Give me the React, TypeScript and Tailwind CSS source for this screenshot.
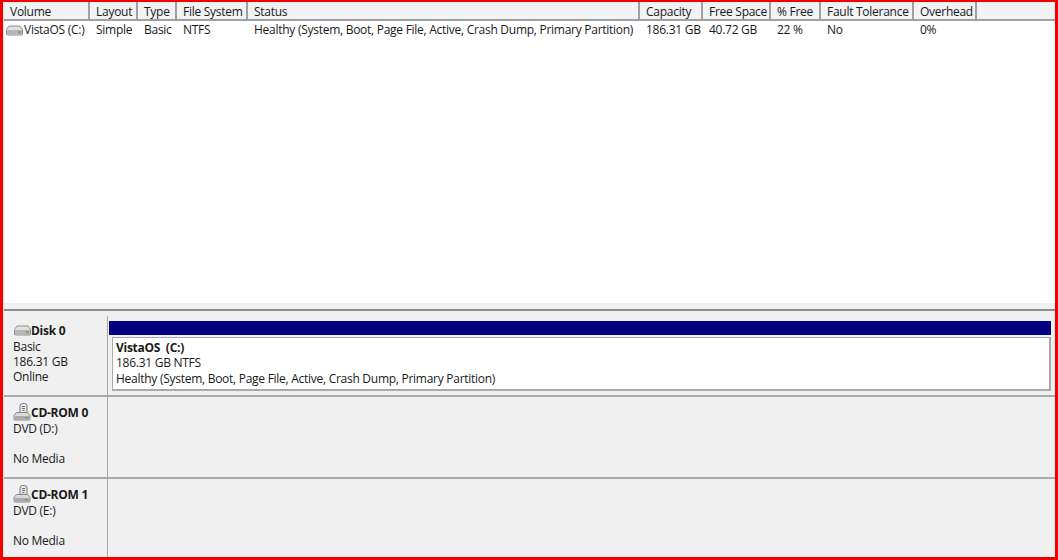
import React from 'react';

const columns = [
  { label: 'Volume', width: 'w-[86px]', value: 'VistaOS (C:)' },
  { label: 'Layout', width: 'w-[48px]', value: 'Simple' },
  { label: 'Type', width: 'w-[39px]', value: 'Basic' },
  { label: 'File System', width: 'w-[71px]', value: 'NTFS' },
  { label: 'Status', width: 'w-[392px]', value: 'Healthy (System, Boot, Page File, Active, Crash Dump, Primary Partition)' },
  { label: 'Capacity', width: 'w-[63px]', value: '186.31 GB' },
  { label: 'Free Space', width: 'w-[68px]', value: '40.72 GB' },
  { label: '% Free', width: 'w-[50px]', value: '22 %' },
  { label: 'Fault Tolerance', width: 'w-[93px]', value: 'No' },
  { label: 'Overhead', width: 'w-[63px]', value: '0%' },
];

function DiskIcon() {
  return (
    <svg width="17" height="11" viewBox="0 0 17 11" className="shrink-0">
      <path d="M3 1h11l2.500 3.500V9a1 1 0 0 1-1 1h-14a1 1 0 0 1-1-1V4.500z" fill="#dfe1df" stroke="#8e9192" />
      <rect x="1" y="5" width="15" height="4.500" fill="#b4b7b5" />
      <rect x="12" y="6" width="3" height="2.500" fill="#8aa184" />
    </svg>
  );
}

function CdIcon() {
  return (
    <svg width="18" height="18" viewBox="0 0 18 18" className="shrink-0">
      <path d="M7 9.500V3a2.500 2.500 0 0 1 2.500-2.500h2A2.500 2.500 0 0 1 14 3v6.500z" fill="#e9e9e9" stroke="#77797a" />
      <path d="M9 3.500h3M9 5.500h3M9.500 7.500h2" stroke="#6a6c6d" />
      <path d="M3.500 9.500h11l2.500 3v3.500a1 1 0 0 1-1 1H2a1 1 0 0 1-1-1v-3.500z" fill="#dadcda" stroke="#85888a" />
      <rect x="1.500" y="13" width="15" height="3.500" fill="#a8aba9" />
      <rect x="12" y="14" width="3" height="1.500" fill="#7f9a78" />
    </svg>
  );
}

function CdRow({ name, drive, rowClass }: { name: string; drive: string; rowClass: string }) {
  return (
    <div className={`flex ${rowClass} border-[#a9a9a9]`}>
      <div className="w-[104px] shrink-0 border-r border-[#a9a9a9] pl-[9px] pt-[5px] leading-[15px]">
        <div className="flex items-end h-[19px] font-bold">
          <CdIcon />
          <span className="mb-[1px]">{name}</span>
        </div>
        <div>{drive}</div>
        <div className="mt-[15px]">No Media</div>
      </div>
      <div className="flex-1" />
    </div>
  );
}

export default function App() {
  return (
    <div className="w-[1058px] h-[560px] overflow-hidden border-x-[3px] border-t-[2px] border-b-[3px] border-[#f10000] bg-[#f0f0f0] text-[12px] text-[#1a1a1a] font-['Open_Sans',sans-serif] tracking-[-0.27px]">
      <div className="h-full border-l border-[#e8e8e8]">
        <div className="h-[301px] bg-white">
          <div className="flex h-[19px] bg-[#f1f2f3] border-b-2 border-[#a0a0a0]">
            {columns.map((c) => (
              <div key={c.label} className={`${c.width} shrink-0 border-r-2 border-[#a0a0a0] pl-[6px] leading-[20px] whitespace-nowrap`}>
                {c.label}
              </div>
            ))}
          </div>
          <div className="flex h-[16px] mt-[1px] leading-[16px]">
            {columns.map((c, i) => (
              <div key={c.label} className={`${c.width} shrink-0 pl-[6px] whitespace-nowrap flex items-center`}>
                {i === 0 && <span className="-ml-[4px] mr-[1px]"><DiskIcon /></span>}
                {c.value}
              </div>
            ))}
          </div>
        </div>
        <div className="h-[8px] bg-[#f0f0f0] border-b-2 border-[#8c8c8c]" />
        <div className="h-[5px]" />
        <div className="flex h-[81px] border-b-2 border-[#a9a9a9]">
          <div className="w-[104px] shrink-0 border-r border-[#a9a9a9] pl-[9px] pt-[7px] leading-[15px]">
            <div className="flex items-center h-[15px] mb-[1px] font-bold ml-[1px]">
              <DiskIcon />
              <span>Disk 0</span>
            </div>
            <div>Basic</div>
            <div>186.31 GB</div>
            <div>Online</div>
          </div>
          <div className="flex-1 pl-[1px] pr-[4px] pt-[5px]">
            <div className="h-[14px] bg-[#000080]" />
            <div className="mt-[2px] ml-[3px] h-[54px] bg-white border border-[#a9a9a9] border-b-2 border-r-2 pl-[3px] pt-[2px] leading-[15px]">
              <div className="font-bold whitespace-pre">VistaOS  (C:)</div>
              <div>186.31 GB NTFS</div>
              <div className="mt-[1px]">Healthy (System, Boot, Page File, Active, Crash Dump, Primary Partition)</div>
            </div>
          </div>
        </div>
        <CdRow name="CD-ROM 0" drive="DVD (D:)" rowClass="h-[82px] border-b-2" />
        <CdRow name="CD-ROM 1" drive="DVD (E:)" rowClass="h-[80px]" />
      </div>
    </div>
  );
}
